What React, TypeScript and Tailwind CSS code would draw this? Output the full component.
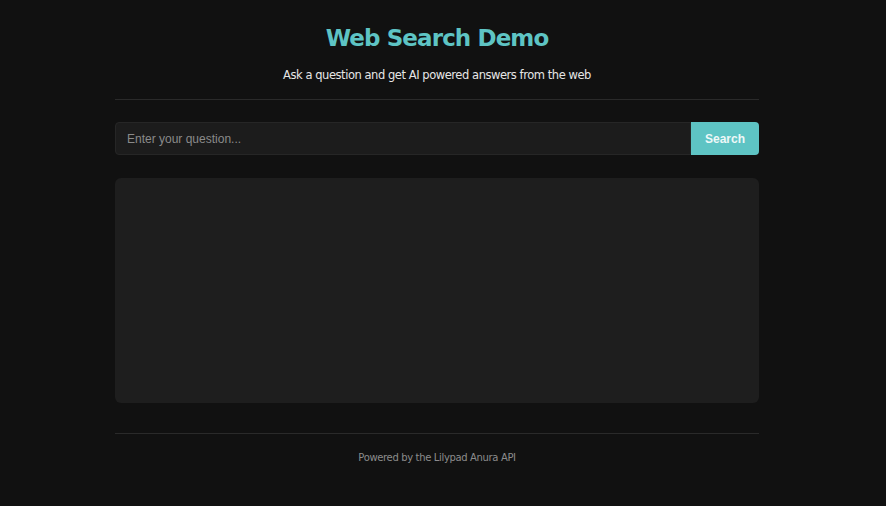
import React from "react";

export default function App() {
  return (
    <div className="min-h-[506px] w-full bg-[#111111] pr-[12px]" style={{ fontFamily: "'DejaVu Sans', Verdana, sans-serif" }}>
      <div className="mx-auto w-[644px] pt-[22px]">
        <h1 className="text-center text-[23px] font-bold leading-[32px] tracking-[-0.9px] text-[#5ec4c4]">
          Web Search Demo
        </h1>
        <p className="mt-[13px] text-center text-[11.5px] leading-[16px] tracking-[-0.45px] text-[#e6e6e6]">
          Ask a question and get AI powered answers from the web
        </p>
        <div className="mt-[16px] h-px bg-[#2a2a2a]" />
        <div className="mt-[22px] flex h-[33px]">
          <input
            className="h-full flex-1 rounded-l-[4px] border border-[#262626] bg-[#1c1c1c] px-[11px] text-[12px] text-[#ddd] outline-none placeholder:text-[#8a8a8a]"
            style={{ fontFamily: "'Liberation Sans', Arial, sans-serif" }}
            placeholder="Enter your question..."
          />
          <button
            className="h-full w-[68px] rounded-r-[4px] bg-[#5ec4c4] text-[12px] font-bold text-[#eef8f8]"
            style={{ fontFamily: "'Liberation Sans', Arial, sans-serif" }}
          >
            Search
          </button>
        </div>
        <div className="mt-[23px] h-[225px] rounded-[6px] bg-[#1e1e1e]" />
        <div className="mt-[30px] h-px bg-[#2a2a2a]" />
        <p className="mt-[17px] text-center text-[10px] leading-[14px] tracking-[-0.35px] text-[#8c8c8c]">
          Powered by the Lilypad Anura API
        </p>
      </div>
    </div>
  );
}
